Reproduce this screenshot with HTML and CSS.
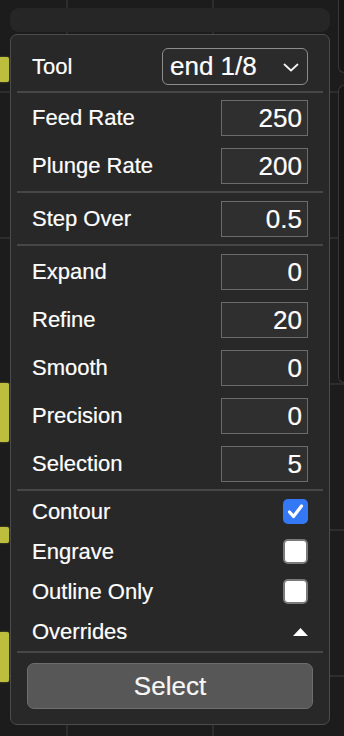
FILE: index.html
```html
<!DOCTYPE html>
<html lang="en">
<head>
    <meta charset="UTF-8">
    <meta name="viewport" content="width=device-width, initial-scale=1.0">
    <title>CAM Settings</title>
    <link rel="stylesheet" href="styles.css">
</head>
<body>
    <!-- 3D view behind the panel -->
    <div class="scene">
        <div class="blip blip-a"></div>
        <div class="blip blip-b"></div>
        <div class="blip blip-c"></div>
        <div class="blip blip-d"></div>
        <div class="side side-top"></div>
        <div class="side side-main"></div>
    </div>

    <div class="app">
        <div class="topbar"></div>

        <div class="panel">
            <div class="row row-tool">
                <span class="label">Tool</span>
                <div class="select">
                    <span>end 1/8</span>
                    <svg class="chevron" width="16" height="9" viewBox="0 0 16 9">
                        <path d="M1.5 1.5 L8 7.5 L14.5 1.5" fill="none" stroke="#f2f2f2" stroke-width="1.8" stroke-linecap="round" stroke-linejoin="round"/>
                    </svg>
                </div>
            </div>
            <div class="sep"></div>

            <div class="group">
                <div class="row">
                    <span class="label">Feed Rate</span>
                    <input class="num" type="text" value="250">
                </div>
                <div class="row">
                    <span class="label">Plunge Rate</span>
                    <input class="num" type="text" value="200">
                </div>
            </div>
            <div class="sep"></div>

            <div class="group">
                <div class="row">
                    <span class="label">Step Over</span>
                    <input class="num" type="text" value="0.5">
                </div>
            </div>
            <div class="sep"></div>

            <div class="group">
                <div class="row">
                    <span class="label">Expand</span>
                    <input class="num" type="text" value="0">
                </div>
                <div class="row">
                    <span class="label">Refine</span>
                    <input class="num" type="text" value="20">
                </div>
                <div class="row">
                    <span class="label">Smooth</span>
                    <input class="num" type="text" value="0">
                </div>
                <div class="row">
                    <span class="label">Precision</span>
                    <input class="num" type="text" value="0">
                </div>
                <div class="row">
                    <span class="label">Selection</span>
                    <input class="num" type="text" value="5">
                </div>
            </div>
            <div class="sep"></div>

            <div class="group group-checks">
                <div class="row row-check">
                    <span class="label">Contour</span>
                    <span class="check checked">
                        <svg width="25" height="25" viewBox="0 0 25 25">
                            <path d="M6.5 13 L10.5 17.5 L18.5 7" fill="none" stroke="#fff" stroke-width="3.2" stroke-linecap="round" stroke-linejoin="round"/>
                        </svg>
                    </span>
                </div>
                <div class="row row-check">
                    <span class="label">Engrave</span>
                    <span class="check"></span>
                </div>
                <div class="row row-check">
                    <span class="label">Outline Only</span>
                    <span class="check"></span>
                </div>
                <div class="row row-check">
                    <span class="label">Overrides</span>
                    <svg class="caret" width="15" height="8" viewBox="0 0 15 8">
                        <path d="M7.5 0 L15 8 L0 8 Z" fill="#fff"/>
                    </svg>
                </div>
            </div>
            <div class="sep"></div>

            <button class="select-btn">Select</button>
        </div>
    </div>
</body>
</html>
```

FILE: styles.css
```css
/* Page and background view */
body {
    margin: 0;
    height: 736px;
    overflow: hidden;
    font-family: "Liberation Sans", Arial, sans-serif;
    color: #fff;
    background-color: #1c1c1c;
    background-image:
        linear-gradient(to right, #2d2d2d 2px, transparent 2px),
        linear-gradient(to bottom, #2d2d2d 2px, transparent 2px);
    background-size: 146px 146px;
    background-position: 66px 91px;
    position: relative;
}

.scene {
    position: absolute;
    inset: 0;
    overflow: hidden;
}

.blip {
    position: absolute;
    left: 0;
    width: 9px;
    background: #bdbe3e;
    border-radius: 0 2px 2px 0;
    box-shadow: 0 0 2px rgba(189, 190, 62, 0.6);
}

.blip-a { top: 57px; height: 25px; }
.blip-b { top: 383px; height: 59px; }
.blip-c { top: 527px; height: 16px; }
.blip-d { top: 632px; height: 50px; }

.side {
    position: absolute;
    left: 338px;
    right: 0;
    background: #161616;
    border: 1px solid #383838;
    border-right: none;
    border-radius: 8px 0 0 8px;
}

.side-top { top: -12px; height: 83px; }
.side-main { top: 85px; height: 296px; }

/* Main layout */
.app {
    position: relative;
    padding: 8px 0 0 10px;
    width: 320px;
}

.topbar {
    height: 24px;
    margin-bottom: 2px;
    background: #262626;
    border-radius: 9px;
}

.panel {
    height: 689px;
    padding: 0 6px;
    background: #282828;
    border: 1px solid #4c4c4c;
    border-radius: 7px;
    display: flex;
    flex-direction: column;
}

.sep {
    height: 2px;
    background: #474747;
    flex-shrink: 0;
}

.group {
    display: flex;
    flex-direction: column;
    gap: 12px;
    padding: 7px 0;
}

.group + .sep + .group {
    padding-top: 8px;
}

.row {
    display: flex;
    align-items: center;
    justify-content: space-between;
    padding: 0 15px;
}

.label {
    font-size: 22px;
    line-height: 26px;
    color: #fff;
    -webkit-text-stroke: 0.2px #fff;
}

/* Tool dropdown */
.row-tool {
    padding-top: 13px;
    padding-bottom: 6px;
}

.select {
    width: 146px;
    height: 37px;
    box-sizing: border-box;
    padding: 0 8px 0 7px;
    border: 1.5px solid #8c8c8c;
    border-radius: 6px;
    background: #2b2b2b;
    display: flex;
    align-items: center;
    justify-content: space-between;
    font-size: 26px;
    -webkit-text-stroke: 0.2px #fff;
}

.chevron {
    margin-top: 1px;
}

/* Number inputs */
.num {
    width: 87px;
    height: 36px;
    box-sizing: border-box;
    margin: 0;
    padding: 0 5px 0 0;
    border: 1px solid #6b6b6b;
    border-radius: 0;
    background: #2f2f2f;
    color: #fff;
    font-family: "Liberation Sans", Arial, sans-serif;
    font-size: 26px;
    text-align: right;
    outline: none;
    -webkit-text-stroke: 0.2px #fff;
}

/* Checkboxes */
.group-checks {
    gap: 15px;
    padding: 9px 0 7px;
}

.row-check {
    height: 25px;
}

.check {
    width: 25px;
    height: 25px;
    box-sizing: border-box;
    border: 2px solid #7a7a7a;
    border-radius: 5px;
    background: #fff;
    display: block;
}

.check.checked {
    border: none;
    background: #3478f6;
}

.check svg {
    display: block;
}

.caret {
    display: block;
}

/* Bottom button */
.select-btn {
    margin: 10px 10px 0;
    height: 46px;
    background: #575757;
    border: 1px solid #6e6e6e;
    border-radius: 7px;
    color: #f7f7f7;
    font-family: "Liberation Sans", Arial, sans-serif;
    font-size: 26px;
    padding: 0;
    -webkit-text-stroke: 0.2px #f7f7f7;
}
```
